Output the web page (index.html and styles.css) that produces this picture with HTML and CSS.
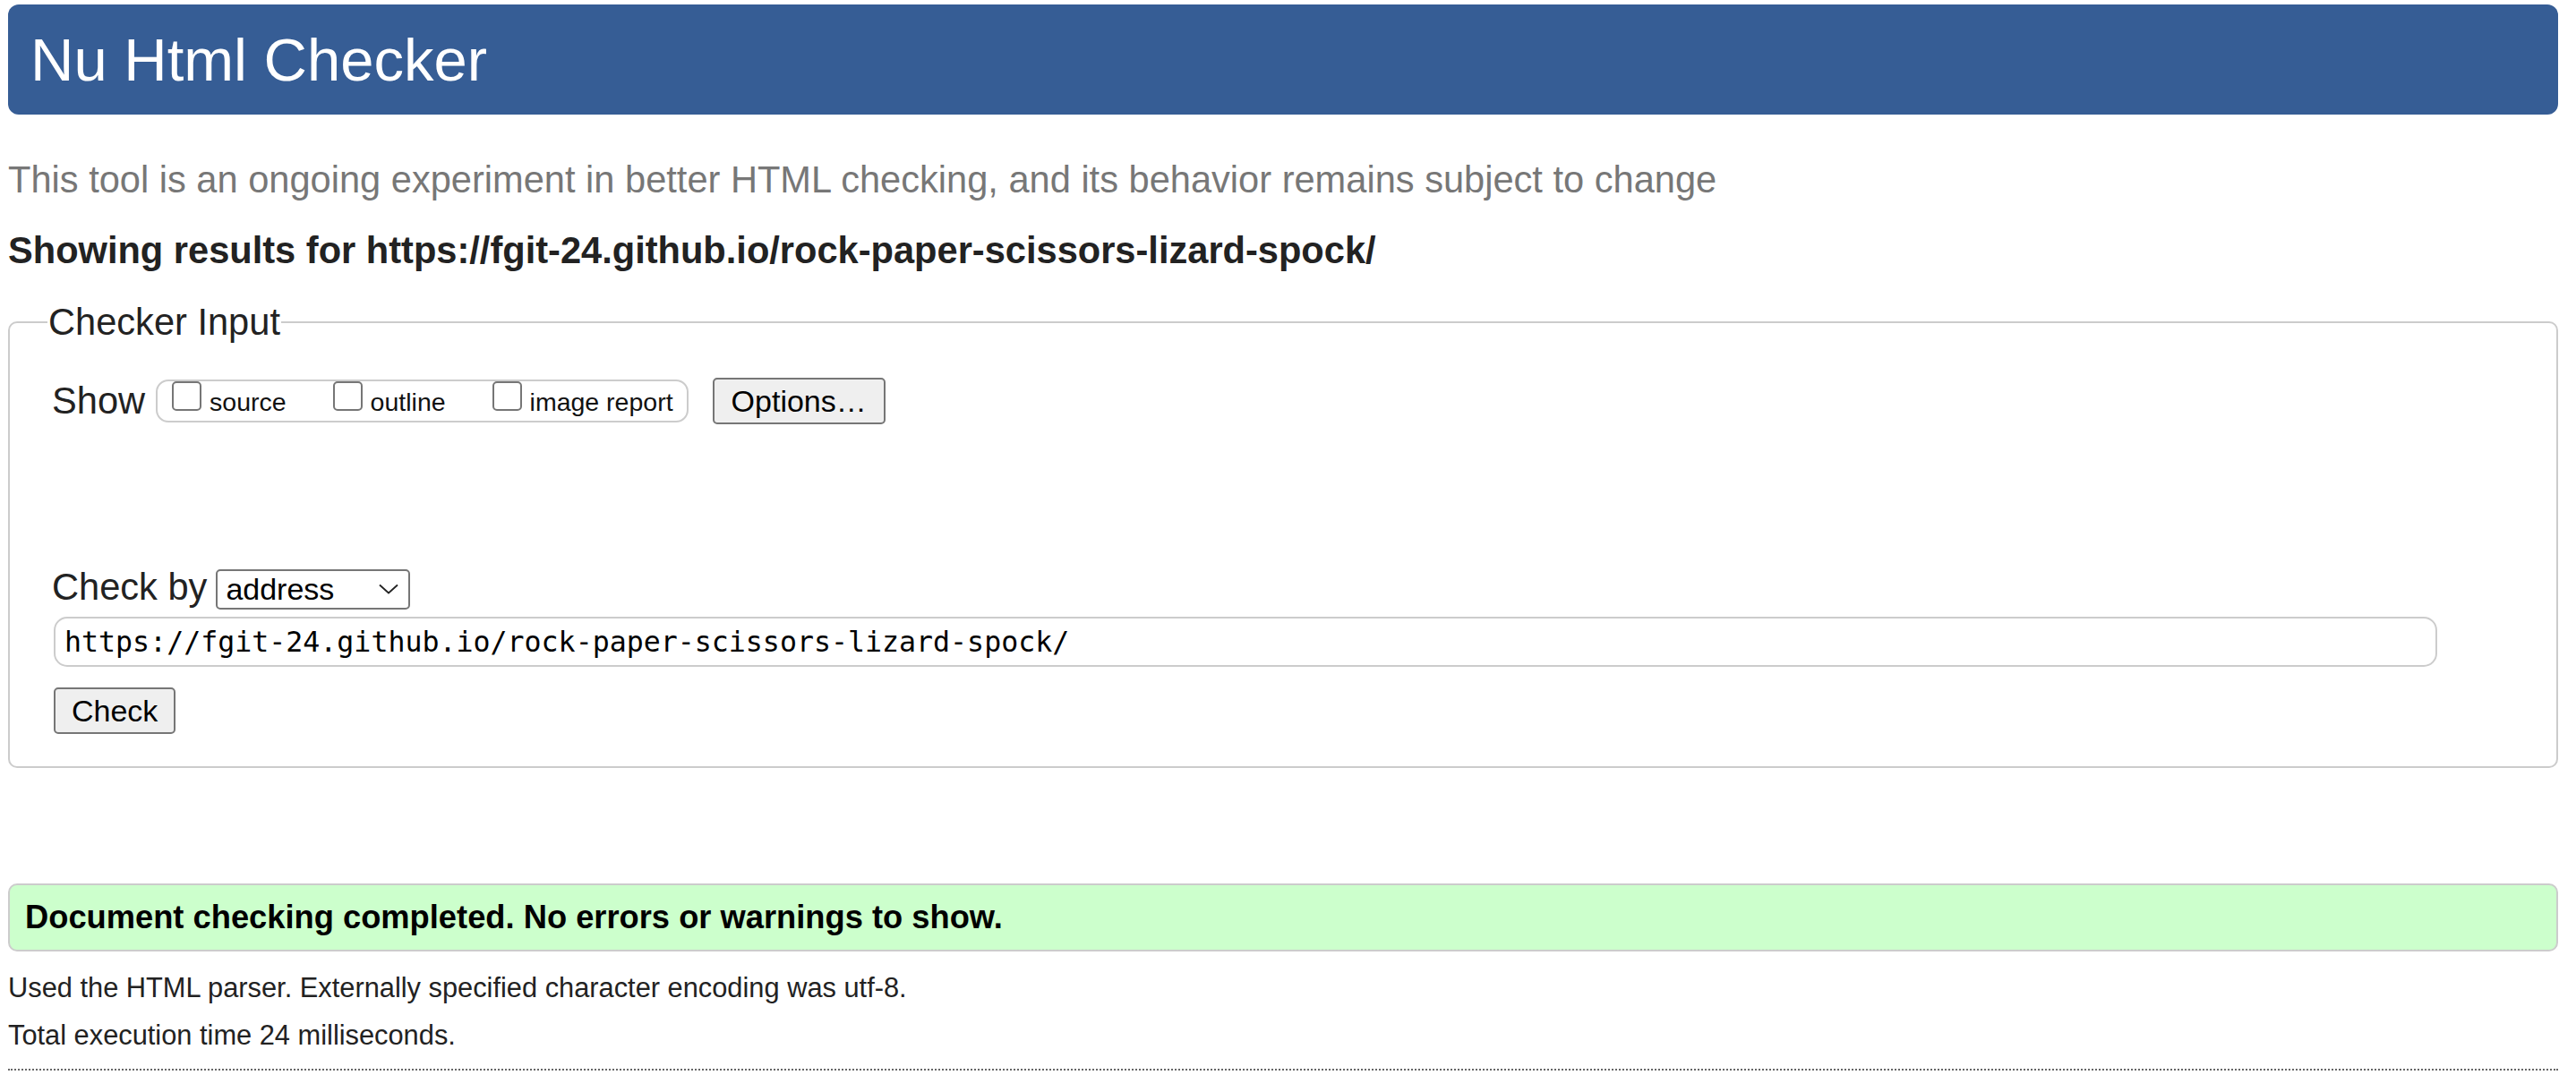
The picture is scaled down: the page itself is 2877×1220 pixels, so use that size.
FILE: index.html
```html
<!DOCTYPE html>
<html lang="en">
<head>
<meta charset="utf-8">
<title>Nu Html Checker</title>
<link rel="stylesheet" href="styles.css">
</head>
<body>
<div class="page">
  <h1 class="banner">Nu Html Checker</h1>
  <p class="lede">This tool is an ongoing experiment in better HTML checking, and its behavior remains subject to change</p>
  <h2 class="results-for">Showing results for https://fgit-24.github.io/rock-paper-scissors-lizard-spock/</h2>
  <form class="form">
    <fieldset class="checker">
      <legend class="checker-legend">Checker Input</legend>
      <div class="show-row">
        <span class="show-label">Show</span>
        <span class="opts">
          <label class="opt"><input class="cb" type="checkbox">source</label>
          <label class="opt"><input class="cb" type="checkbox">outline</label>
          <label class="opt"><input class="cb" type="checkbox">image report</label>
        </span>
        <button type="button" class="btn btn-options">Options…</button>
      </div>
      <div class="checkby-row">
        <span class="checkby-label">Check by</span>
        <span class="select">
          <span class="select-text">address</span>
          <svg class="chev" width="22" height="12" viewBox="0 0 22 12" aria-hidden="true"><polyline points="1,1.5 11,10.5 21,1.5" fill="none" stroke="#222" stroke-width="1.8"/></svg>
        </span>
      </div>
      <input class="url" type="text" value="https://fgit-24.github.io/rock-paper-scissors-lizard-spock/">
      <button type="button" class="btn btn-check">Check</button>
    </fieldset>
  </form>
  <div class="success">Document checking completed. No errors or warnings to show.</div>
  <p class="meta meta-first">Used the HTML parser. Externally specified character encoding was utf-8.</p>
  <p class="meta meta-second">Total execution time 24 milliseconds.</p>
  <hr class="dots">
</div>
</body>
</html>
```
FILE: styles.css
```css
* { box-sizing: border-box; }
html, body { margin: 0; padding: 0; background: #fff; }
body {
  font-family: "Liberation Sans", Arial, sans-serif;
  font-size: 41.6px;
  color: #222;
}
.page { padding: 5px 20px 20px 9px; }

.banner {
  margin: 0;
  background: #365d95;
  color: #fff;
  font-weight: normal;
  font-size: 67px;
  line-height: 76px;
  padding: 24px 25px 23px;
  border-radius: 12px;
}

.lede {
  margin: 48.5px 0 0;
  color: #777;
  font-size: 41.6px;
  line-height: 48px;
}

.results-for {
  margin: 31px 0 0;
  font-size: 41.6px;
  line-height: 48px;
  font-weight: bold;
  color: #222;
}

.form { margin: 34px 0 0; }

.checker {
  margin: 0;
  min-width: 0;
  border: 2px solid #ccc;
  border-radius: 10px;
  padding: 40px 20px 36px 47px;
}
.checker-legend {
  font-size: 41.6px;
  line-height: 44px;
  padding: 0 1px;
  margin-left: -5px;
  color: #222;
}

.show-row {
  display: flex;
  align-items: center;
  height: 52px;
}
.show-label {
  line-height: 48px;
  margin-right: 12px;
}
.opts {
  display: flex;
  align-items: flex-start;
  height: 48px;
  border: 2px solid #ccc;
  border-radius: 14px;
  padding: 0 15px 0 16px;
}
.opt {
  display: flex;
  align-items: baseline;
  font-size: 28.5px;
  line-height: 33px;
  color: #111;
  margin-right: 52px;
}
.opt:last-child { margin-right: 0; }
.cb {
  appearance: none;
  -webkit-appearance: none;
  width: 33px;
  height: 33px;
  margin: 0 9px 0 0;
  border: 2px solid #767676;
  border-radius: 5px;
  background: #fff;
}

.btn {
  font-family: "Liberation Sans", Arial, sans-serif;
  font-size: 34px;
  color: #000;
  background: #efefef;
  border: 2px solid #767676;
  border-radius: 5px;
  height: 52px;
  padding: 0 19px;
  line-height: 44px;
}
.btn-options { margin-left: 27px; }
.btn-check { display: block; margin: 23px 0 0 2px; padding: 0 18px; }

.checkby-row {
  display: flex;
  align-items: baseline;
  margin-top: 158px;
}
.checkby-label {
  line-height: 48px;
  margin-right: 10px;
}
.select {
  display: inline-flex;
  align-items: center;
  justify-content: space-between;
  width: 217px;
  height: 45px;
  border: 2px solid #767676;
  border-radius: 5px;
  padding: 0 11px 0 9px;
  font-size: 34px;
  line-height: 41px;
  color: #000;
}
.chev { display: block; }

.url {
  display: block;
  width: 2662px;
  height: 56px;
  margin: 8px 0 0 2px;
  border: 2px solid #ccc;
  border-radius: 15px;
  padding: 0 10px;
  font-family: "DejaVu Sans Mono", "Liberation Mono", monospace;
  font-size: 31.6px;
  color: #000;
  background: #fff;
  outline: none;
}

.success {
  margin-top: 129px;
  background: #ccffcc;
  border: 2px solid #ccc;
  border-radius: 10px;
  padding: 15px 17px;
  font-weight: bold;
  font-size: 36.3px;
  line-height: 42px;
  color: #000;
}

.meta {
  margin: 0;
  font-size: 30.8px;
  line-height: 36px;
  color: #222;
}
.meta-first { margin-top: 23px; }
.meta-second { margin-top: 17px; }

.dots {
  margin: 19px 0 0;
  height: 0;
  border: 0;
  border-top: 2px dotted #666;
}
```
